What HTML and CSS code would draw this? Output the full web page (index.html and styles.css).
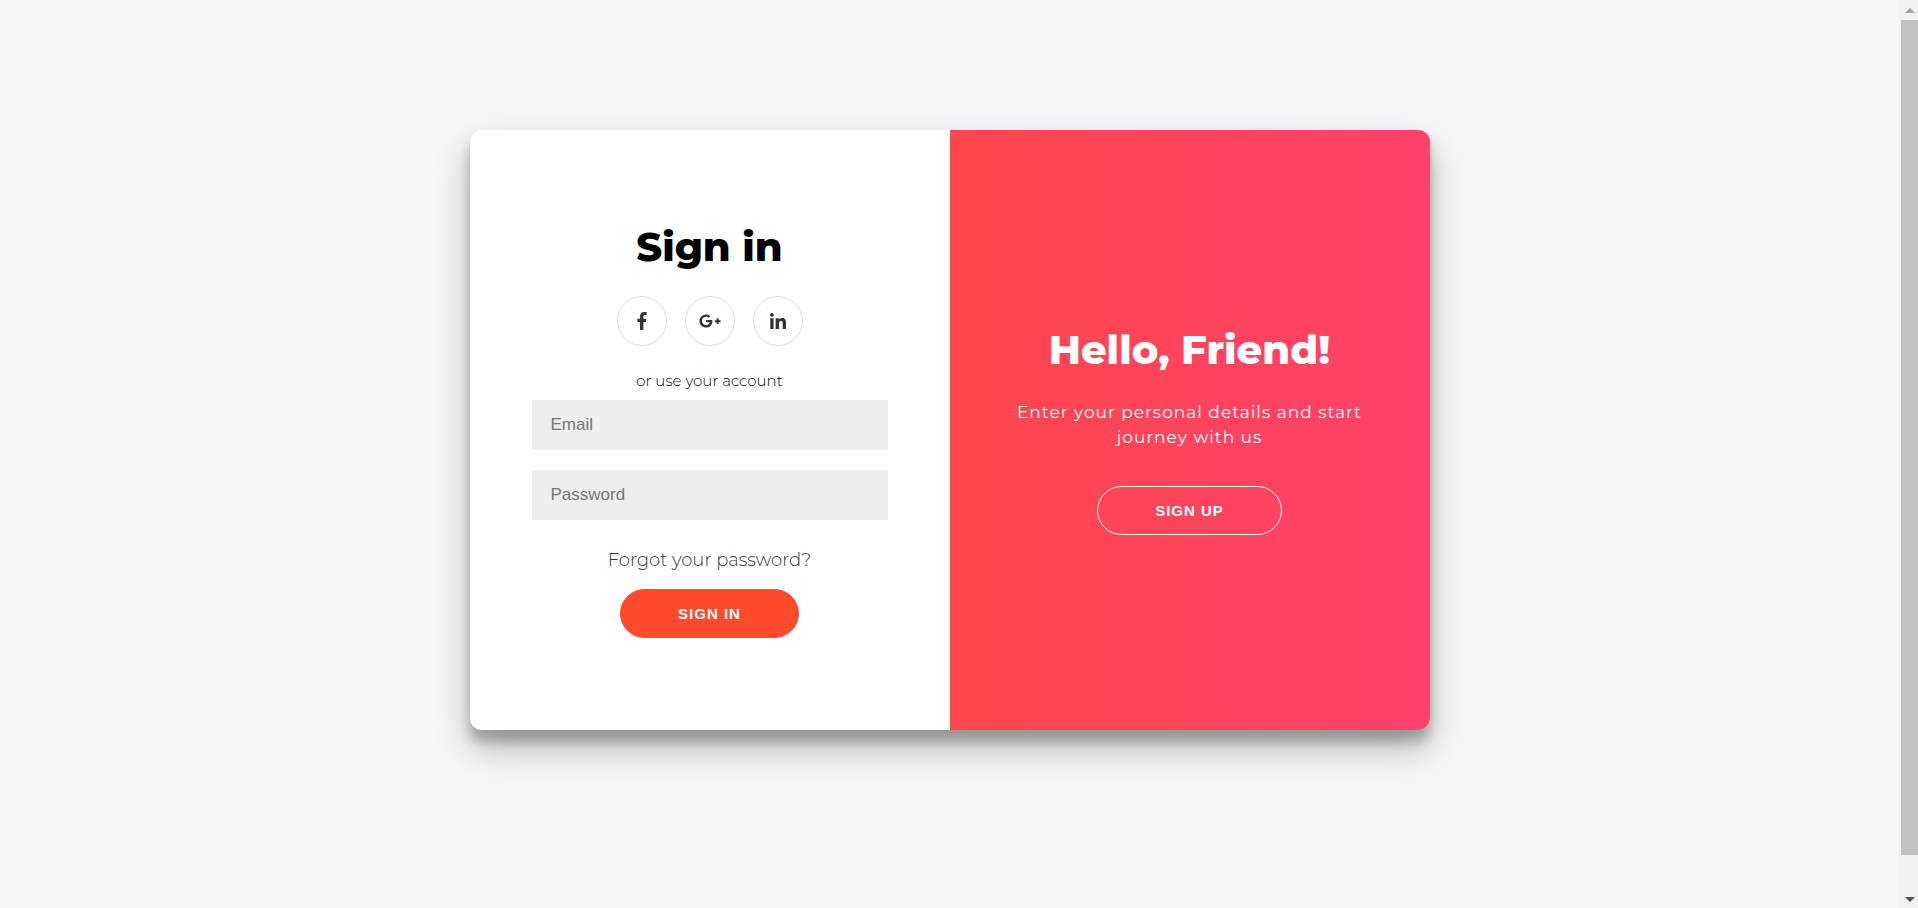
FILE: index.html
```
<!DOCTYPE html>
<html lang="en">
<head>
    <meta charset="UTF-8">
    <meta name="viewport" content="width=device-width, initial-scale=1.0">
    <title>Sign in</title>
    <link rel="stylesheet" href="styles.css">
</head>
<body>

    <main class="page">
        <div class="container">
            <form class="sign-in" action="#">
                <h1>Sign in</h1>
                <div class="social-container">
                    <a href="#" class="social" aria-label="Facebook">
                        <svg width="10" height="18" viewBox="0 0 264 512"><path d="M76.7 512V283H0v-91h76.7v-71.7C76.7 42.4 124.3 0 193.8 0c33.3 0 61.9 2.5 70.2 3.6V85h-48.2c-37.8 0-45.1 18-45.1 44.3V192H256l-11.7 91h-73.6v229z"/></svg>
                    </a>
                    <a href="#" class="social" aria-label="Google Plus">
                        <svg width="22" height="18" viewBox="0 0 640 512"><path d="M386.061 228.496c1.834 9.692 3.143 19.384 3.143 31.956C389.204 370.205 315.599 448 204.8 448c-106.084 0-192-85.915-192-192s85.916-192 192-192c51.864 0 95.083 18.859 128.611 50.292l-52.126 50.03c-14.145-13.621-39.028-29.599-76.485-29.599-65.484 0-118.92 54.221-118.92 121.277 0 67.056 53.436 121.277 118.92 121.277 75.961 0 104.513-54.745 108.965-82.773H204.8v-66.009h181.261zm185.406 6.437V179.2h-56.001v55.733h-55.733v56.001h55.733v55.733h56.001v-55.733H627.2v-56.001h-55.733z"/></svg>
                    </a>
                    <a href="#" class="social" aria-label="LinkedIn">
                        <svg width="16" height="16" viewBox="0 0 448 448"><path d="M100.3 448H7.4V148.9h92.9V448zM53.8 108.1C24.1 108.1 0 83.5 0 53.8S24.1 0 53.8 0s53.8 24.1 53.8 53.8-24.1 54.3-53.8 54.3zM448 448h-92.7V302.4c0-34.7-.7-79.2-48.3-79.2-48.3 0-55.7 37.7-55.7 76.7V448h-92.8V148.9h89.1v40.8h1.3c12.4-23.5 42.7-48.3 87.9-48.3 94 0 111.3 61.9 111.3 142.3V448z"/></svg>
                    </a>
                </div>
                <span class="hint">or use your account</span>
                <input type="email" placeholder="Email" aria-label="Email">
                <input type="password" placeholder="Password" aria-label="Password">
                <a href="#" class="forgot">Forgot your password?</a>
                <button type="submit">Sign In</button>
            </form>

            <div class="overlay">
                <h1>Hello, Friend!</h1>
                <p>Enter your personal details and start journey with us</p>
                <button type="button" class="ghost">Sign Up</button>
            </div>
        </div>
    </main>

    <!-- Page scroll bar -->
    <div class="scrollbar">
        <span class="arrow up"></span>
        <div class="thumb"></div>
        <span class="arrow down"></span>
    </div>

</body>
</html>
```
FILE: styles.css
```
* {
    box-sizing: border-box;
}

body {
    display: flex;
    min-height: 100vh;
    margin: 0;
    background: #f6f6f8;
    font-family: 'Montserrat', 'Inter', sans-serif;
}

/* Center the card */
.page {
    flex: 1;
    display: flex;
    justify-content: center;
    align-items: center;
    padding-bottom: 48px;
}

.container {
    display: flex;
    width: 960px;
    max-width: 100%;
    min-height: 600px;
    background: #fff;
    border-radius: 12px;
    overflow: hidden;
    box-shadow: 0 18px 35px rgba(0, 0, 0, 0.25), 0 12px 12px rgba(0, 0, 0, 0.22);
}

/* Both halves */
.sign-in,
.overlay {
    width: 50%;
    display: flex;
    flex-direction: column;
    justify-content: center;
    align-items: center;
    text-align: center;
}

.sign-in {
    padding: 0 62px;
}

.overlay {
    padding: 0 50px;
    color: #fff;
    background: linear-gradient(to right, #ff464c, #ff416c);
}

h1 {
    margin: 0;
    font-size: 40px;
    font-weight: 800;
    line-height: 48px;
}

/* Social links */
.social-container {
    display: flex;
    gap: 18px;
    margin: 25px 0;
}

.social {
    display: flex;
    justify-content: center;
    align-items: center;
    width: 50px;
    height: 50px;
    border: 1px solid #ddd;
    border-radius: 50%;
}

.social svg {
    fill: #333;
}

.hint {
    margin-bottom: 9px;
    font-size: 15px;
    font-weight: 300;
    line-height: 20px;
}

input {
    width: 100%;
    height: 50px;
    margin-bottom: 20px;
    padding: 0 19px;
    border: none;
    background: #eee;
    font-family: 'Liberation Sans', Arial, sans-serif;
    font-size: 17px;
}

input::placeholder {
    color: #757575;
}

.forgot {
    margin: 8px 0 17px;
    color: #333;
    font-size: 18px;
    font-weight: 300;
    line-height: 24px;
    text-decoration: none;
}

/* Buttons */
button {
    height: 49px;
    padding: 0 57px;
    border: 1px solid #ff4b2b;
    border-radius: 25px;
    background: #ff4b2b;
    color: #fff;
    font-family: 'Liberation Sans', Arial, sans-serif;
    font-size: 15px;
    font-weight: 700;
    letter-spacing: 1px;
    text-transform: uppercase;
    cursor: pointer;
}

button.ghost {
    background: transparent;
    border-color: #fff;
}

.overlay p {
    margin: 26px 0 36px;
    font-size: 17px;
    line-height: 25px;
    letter-spacing: 1px;
}

/* Scroll bar */
.scrollbar {
    display: flex;
    flex-direction: column;
    align-items: center;
    width: 19px;
    padding: 8px 0 6px 2px;
    background: #f1f1f1;
}

.thumb {
    flex: 1;
    width: 100%;
    margin: 7px 0 42px;
    background: #c1c1c1;
}

.arrow {
    border: 5px solid transparent;
}

.up {
    border-top: none;
    border-bottom-color: #a3a3a3;
}

.down {
    border-bottom: none;
    border-top-color: #505050;
}
```
